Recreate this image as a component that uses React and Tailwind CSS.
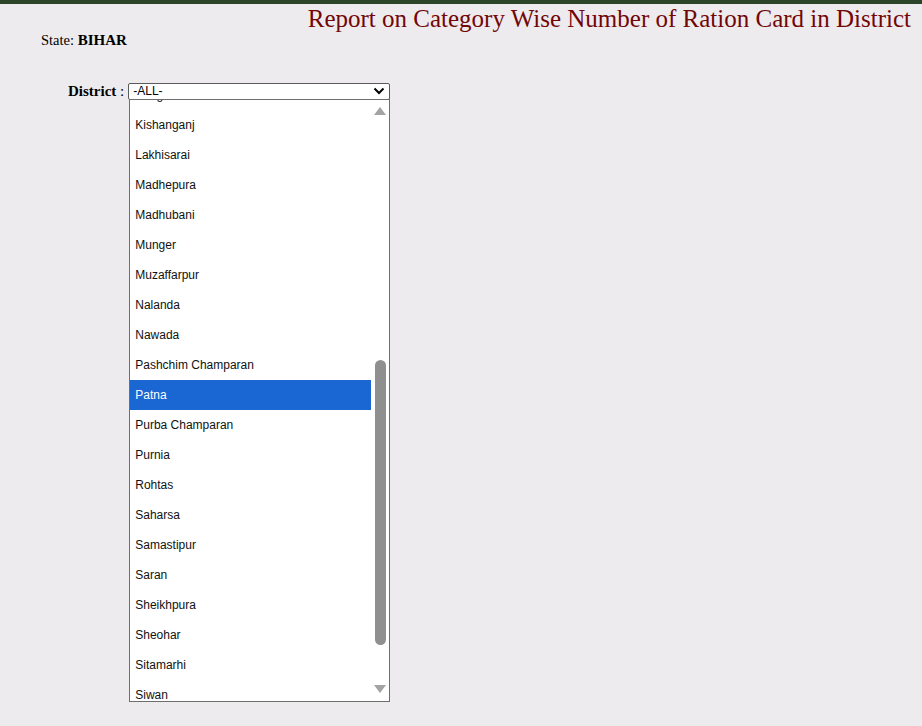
import React from 'react';

const districts = [
  'Khagaria', 'Kishanganj', 'Lakhisarai', 'Madhepura', 'Madhubani', 'Munger', 'Muzaffarpur',
  'Nalanda', 'Nawada', 'Pashchim Champaran', 'Patna', 'Purba Champaran', 'Purnia', 'Rohtas',
  'Saharsa', 'Samastipur', 'Saran', 'Sheikhpura', 'Sheohar', 'Sitamarhi', 'Siwan',
];

const App = () => {
  return (
    <div className="min-h-[726px] bg-[#edebee] font-['Liberation_Serif',serif] text-black">
      <div className="h-[4px] bg-[#2c4428]" />
      <div className="flex justify-end pr-[11px] pt-[1px]">
        <h1 className="text-[25px] leading-[28px] text-[#720606]">Report on Category Wise Number of Ration Card in District</h1>
      </div>
      <div className="pl-[41px] -mt-[2px] text-[14.5px] leading-[18px]">
        State: <b className="text-[15px]">BIHAR</b>
      </div>

      <div className="flex items-center pl-[68px] mt-[33px]">
        <span className="text-[15px] leading-[18px]"><b>District</b> :</span>
        <div className="relative ml-[4px]">
          <div className="w-[262px] h-[17px] border border-[#5a5a5a] rounded-[2px] bg-white flex items-center justify-between pl-[4px] pr-[3px] font-['Liberation_Sans',Arial,sans-serif] text-[12px]">
            <span className="leading-[15px] pt-[1px]">-ALL-</span>
            <svg width="12" height="8" viewBox="0 0 12 8" className="mr-[1px]">
              <path d="M1.5 1.5 L6 6 L10.5 1.5" fill="none" stroke="#000" strokeWidth="2" />
            </svg>
          </div>
          <div className="absolute left-[1px] top-[16px] w-[261px] h-[603px] border border-[#6e6e6e] bg-white overflow-hidden font-['Liberation_Sans',Arial,sans-serif] text-[12px] text-[#111]">
            <div className="-mt-[20px] mr-[18px]">
              {districts.map(d => (
                <div
                  key={d}
                  className={`h-[30px] flex items-center pl-[5px] ${d === 'Patna' ? 'bg-[#1a66d2] text-white' : ''}`}
                >
                  {d}
                </div>
              ))}
            </div>
            <div className="absolute right-0 top-0 bottom-0 w-[18px] bg-white">
              <svg className="absolute left-[3px] top-[7px]" width="12" height="8" viewBox="0 0 12 8">
                <path d="M6 0 L12 8 L0 8 Z" fill="#a3a3a3" />
              </svg>
              <div className="absolute left-[4px] top-[260px] w-[11px] h-[285px] rounded-full bg-[#8f8f8f]" />
              <svg className="absolute left-[3px] bottom-[8px]" width="12" height="8" viewBox="0 0 12 8">
                <path d="M0 0 L12 0 L6 8 Z" fill="#a3a3a3" />
              </svg>
            </div>
          </div>
        </div>
      </div>
    </div>
  );
};

export default App;
